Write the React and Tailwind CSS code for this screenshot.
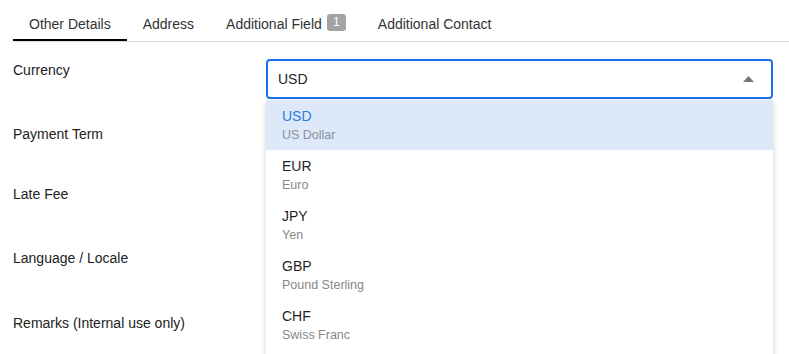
import React from 'react';

const tabs = ["Other Details", "Address", "Additional Field", "Additional Contact"];

const currencies = [
  { code: "USD", name: "US Dollar" },
  { code: "EUR", name: "Euro" },
  { code: "JPY", name: "Yen" },
  { code: "GBP", name: "Pound Sterling" },
  { code: "CHF", name: "Swiss Franc" },
];

const rows = [
  { label: "Payment Term", h: "h-[60px]" },
  { label: "Late Fee", h: "h-[64px]" },
  { label: "Language / Locale", h: "h-[65px]" },
  { label: "Remarks (Internal use only)", h: "h-[65px]" },
];

const App = () => {
  return (
    <div className="w-[789px] h-[354px] overflow-hidden bg-white text-[#222] font-['Liberation_Sans',Arial,sans-serif]">
      <div className="ml-[13px] flex border-b border-[#dedede] h-[42px]">
        {tabs.map((t, i) => (
          <div
            key={t}
            className={
              "px-4 pt-[14px] text-[14px] leading-[20px] text-[#333] flex items-start gap-[5px] " +
              (i === 0 ? "border-b-2 border-black text-[#111]" : "")
            }
          >
            <span>{t}</span>
            {t === "Additional Field" && (
              <span className="h-[17px] w-[19px] rounded-[3px] bg-[#a3a3a3] text-white text-[12px] leading-[17px] text-center">
                1
              </span>
            )}
          </div>
        ))}
      </div>

      <div className="mt-[17px] ml-[13px] mr-[16px]">
        <div className="flex h-[65px]">
          <div className="w-[253px] pt-[1px] text-[14px] leading-[20px]">Currency</div>
          <div className="flex-1 relative">
            <div className="h-[40px] rounded-[4px] border-2 border-[#1a73e8] flex items-center justify-between pl-[10px] pr-[17px]">
              <span className="text-[14px] text-[#222]">USD</span>
              <svg width="11" height="6" viewBox="0 0 11 6">
                <path d="M0 6 L5.5 0 L11 6 Z" fill="#777" />
              </svg>
            </div>
            <div className="absolute left-0 right-0 top-[41px] bg-white pb-[10px] shadow-[0_2px_6px_rgba(0,0,0,0.18)] rounded-[2px] z-10">
              {currencies.map((c, i) => (
                <div
                  key={c.code}
                  className={"h-[50px] pl-[16px] pt-[6px] " + (i === 0 ? "bg-[#dde9f9]" : "")}
                >
                  <div className={"text-[14px] leading-[20px] " + (i === 0 ? "text-[#2b7de0]" : "text-[#1f1f1f]")}>
                    {c.code}
                  </div>
                  <div className={"text-[12.5px] leading-[19px] " + (i === 0 ? "text-[#8b9099]" : "text-[#888]")}>
                    {c.name}
                  </div>
                </div>
              ))}
            </div>
          </div>
        </div>
        {rows.map((r) => (
          <div key={r.label} className={"flex " + r.h}>
            <div className="w-[253px] text-[14px] leading-[20px]">{r.label}</div>
            <div className="flex-1" />
          </div>
        ))}
      </div>
    </div>
  );
};

export default App;
